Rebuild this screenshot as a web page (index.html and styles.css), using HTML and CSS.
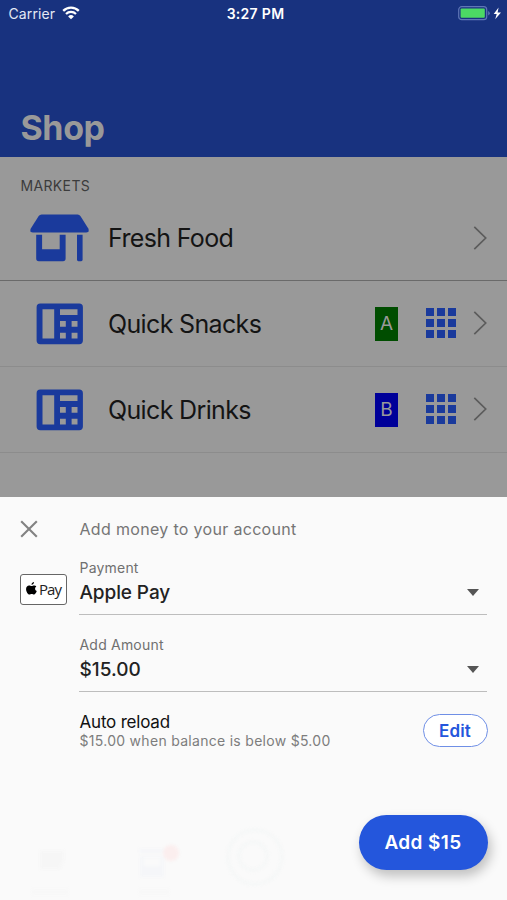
FILE: index.html
```html
<!DOCTYPE html>
<html lang="en">
<head>
<meta charset="utf-8">
<title>Shop</title>
<link rel="stylesheet" href="styles.css">
</head>
<body>
<svg class="defs" aria-hidden="true">
  <symbol id="machine" viewBox="0 0 48 42">
    <path fill-rule="evenodd" d="M4.300 .6h38.900a3.700 3.700 0 0 1 3.700 3.700v33.200a3.700 3.700 0 0 1-3.700 3.700H4.300a3.700 3.700 0 0 1-3.700-3.700V4.300a3.700 3.700 0 0 1 3.700-3.700zM6.500 6.300v29.200h11.700V6.300zM24 6.300v5.700h17.500V6.300zM24 18v5.800h5.800V18zM35.600 18v5.800h5.900V18zM24 29.700v5.800h5.800v-5.800zM35.600 29.700v5.800h5.900v-5.800z"/>
  </symbol>
  <symbol id="grid" viewBox="0 0 30 30">
    <path d="M0 0h8v8H0zM11 0h8v8h-8zM22 0h8v8h-8zM0 11h8v8H0zM11 11h8v8h-8zM22 11h8v8h-8zM0 22h8v8H0zM11 22h8v8h-8zM22 22h8v8h-8z"/>
  </symbol>
  <symbol id="chevron" viewBox="0 0 14 24">
    <path d="M1.300 .8 12.700 12 1.300 23.200" fill="none" stroke="#5c5c5c" stroke-width="1.700"/>
  </symbol>
</svg>

<header class="header">
  <div class="status">
    <div class="status-left">
      <span class="carrier">Carrier</span>
      <svg class="wifi" viewBox="0 0 18 14" fill="none" stroke="#fff">
        <path d="M1.200 4.900a11 11 0 0 1 15.600 0" stroke-width="2.300"/>
        <path d="M4 8a7.100 7.100 0 0 1 10 0" stroke-width="2.200"/>
        <path d="M6.100 10.400a4.100 4.100 0 0 1 5.800 0L9 13.300z" fill="#fff" stroke="none"/>
      </svg>
    </div>
    <span class="time">3:27 PM</span>
    <div class="status-right">
      <svg class="battery" viewBox="0 0 43 15">
        <rect x=".7" y=".7" width="28" height="13" rx="3" fill="none" stroke="#5f76b6" stroke-width="1.200"/>
        <rect x="2.600" y="2.600" width="24.200" height="9.200" rx="1" fill="#4cd964"/>
        <path d="M30.200 5v4.500q1.600-.7 1.600-2.250T30.200 5z" fill="#5f76b6"/>
        <path d="M40.600 1.500 35.700 8h3l-1.500 5.300L43 6.500h-3.400z" fill="#fff"/>
      </svg>
    </div>
  </div>
  <h1 class="title">Shop</h1>
</header>

<main class="list">
  <h2 class="section">MARKETS</h2>
  <div class="row row-first">
    <svg class="icon-store" viewBox="0 0 60 48">
      <path d="M11.600 .5h36q1.800 0 2.800 1.500l7.900 12.500q.8 1.500.2 2.700-.7 1.300-2.500 1.300H3q-1.800 0-2.500-1.300-.5-1.200.3-2.700L8.700 2q1-1.500 2.900-1.500z"/>
      <path fill-rule="evenodd" d="M6.200 20.800h5.900v14.500h17.600V20.800h5.900v23.800q0 2.600-2.600 2.600H8.800q-2.600 0-2.600-2.600z"/>
      <path d="M47 20.800h5.600v25q0 1.400-1.400 1.400h-2.800q-1.400 0-1.400-1.400z"/>
    </svg>
    <span class="name">Fresh Food</span>
    <svg class="chevron"><use href="#chevron"/></svg>
  </div>
  <div class="row">
    <svg class="icon-machine"><use href="#machine"/></svg>
    <span class="name">Quick Snacks</span>
    <span class="badge badge-a">A</span>
    <svg class="grid"><use href="#grid"/></svg>
    <svg class="chevron"><use href="#chevron"/></svg>
  </div>
  <div class="row">
    <svg class="icon-machine"><use href="#machine"/></svg>
    <span class="name">Quick Drinks</span>
    <span class="badge badge-b">B</span>
    <svg class="grid"><use href="#grid"/></svg>
    <svg class="chevron"><use href="#chevron"/></svg>
  </div>
</main>

<section class="sheet">
  <div class="sheet-head">
    <svg class="close" viewBox="0 0 18 18"><path d="M1.200 1.200 16.800 16.800M16.800 1.200 1.200 16.800" stroke="#828282" stroke-width="2.100"/></svg>
    <span class="sheet-title">Add money to your account</span>
  </div>
  <div class="sheet-body">
    <div class="pay-mark">
      <svg class="apple" viewBox="0 0 20 24"><path d="M14.600 0c.2 2.600-2 5.300-4.600 5.300C9.700 2.700 12.200.2 14.600 0zM18.900 8.200c-3.500 2.200-3 6.900.8 8.500-.9 2.900-3 6.500-5.100 6.500-1.700 0-2.200-1-4.200-1s-2.600 1-4.200 1C3.200 23.200 0 17.500 0 13 0 8.700 2.700 6.300 5.500 6.300c1.900 0 3.300 1.200 4.700 1.200 1.300 0 3-1.300 5.100-1.200 1.500.1 2.800.7 3.600 1.900z"/></svg>
      <span class="pay-text">Pay</span>
    </div>
    <div class="fields">
      <div class="field">
        <span class="label">Payment</span>
        <div class="select"><span class="value pay-value">Apple Pay</span><span class="caret"></span></div>
      </div>
      <div class="field">
        <span class="label">Add Amount</span>
        <div class="select"><span class="value">$15.00</span><span class="caret"></span></div>
      </div>
      <div class="reload">
        <div class="reload-text">
          <span class="reload-title">Auto reload</span>
          <span class="reload-note">$15.00 when balance is below $5.00</span>
        </div>
        <button class="edit">Edit</button>
      </div>
    </div>
  </div>
  <footer class="actions">
    <div class="ghost-tabs">
      <svg class="ghosts" viewBox="0 0 260 60">
        <path d="M14 16h24v9l-4 9H14z" fill="#f6f6f6"/>
        <path d="M6 54h36v6H6z" fill="#f8f8f8"/>
        <path d="M113 14h26v4h-26zM114 21h24v21h-24z" fill="#f5f6f9"/>
        <path d="M118 23h16v8h-16z" fill="#fafafa"/>
        <circle cx="145" cy="18" r="8" fill="#fbeeee"/>
        <path d="M113 54h30v6h-30z" fill="#f8f8f8"/>
        <circle cx="229" cy="22" r="27" fill="none" stroke="#f5f7f7" stroke-width="3"/>
        <circle cx="227" cy="21" r="14" fill="none" stroke="#f5f7f7" stroke-width="3"/>
      </svg>
    </div>
    <button class="add">Add $15</button>
  </footer>
</section>
</body>
</html>
```

FILE: styles.css
```css
* { box-sizing: border-box; }

body {
  margin: 0;
  width: 507px;
  height: 900px;
  overflow: hidden;
  display: flex;
  flex-direction: column;
  background: #999;
  font-family: Inter, "Liberation Sans", sans-serif;
}

button { font-family: inherit; padding: 0; }
svg, span { flex: none; }
.defs { display: none; }

.header {
  height: 157px;
  flex: none;
  background: #18327f;
}

.status {
  height: 28px;
  padding: 0 6px 0 8px;
  display: grid;
  grid-template-columns: 1fr auto 1fr;
  align-items: center;
  color: #fff;
  font-size: 14px;
}
.status-left { display: flex; align-items: center; gap: 7px; }
.status-right { display: flex; justify-content: flex-end; }
.carrier { margin-top: -2px; padding-left: .5px; letter-spacing: .1px; color: #e4e9f4; }
.time { margin-top: -2px; padding-left: 2px; font-weight: 600; letter-spacing: .3px; }
.wifi { width: 18px; height: 14px; margin: -2px 0 0 -.5px; }
.battery { width: 43px; height: 15px; margin-top: -2px; }

.title {
  margin: 79px 0 0 20.5px;
  font-size: 34px;
  line-height: 42px;
  font-weight: 700;
  letter-spacing: -.4px;
  color: #999;
}

.list { height: 340px; flex: none; background: #999; }
.section {
  height: 38px;
  margin: 0;
  padding: 19px 0 0 20.5px;
  font-size: 14px;
  line-height: 20px;
  font-weight: 400;
  letter-spacing: .35px;
  color: #3c3c3c;
}
.row {
  height: 86px;
  padding: 0 20px 1px 36px;
  display: flex;
  align-items: center;
  border-bottom: 1px solid #8c8c8c;
  fill: #1a3a9c;
}
.row-first { padding-left: 30px; padding-bottom: 0; border-bottom-color: #6a6a6a; }
.icon-store { width: 60px; height: 48px; margin-right: 18px; }
.icon-machine { width: 48px; height: 42px; margin: 1px 24px 0 0; }
.name { flex: 1; font-size: 25px; line-height: 30px; letter-spacing: -.65px; color: #141414; }
.icon-machine + .name { padding-top: 2px; }
.badge {
  width: 23px;
  height: 34px;
  margin: 1px 28px 0 0;
  font-size: 19px;
  line-height: 34px;
  text-align: center;
  color: #999;
}
.badge-a { background: #004d00; }
.badge-b { background: #000099; }
.grid { width: 30px; height: 30px; margin-right: 17px; }
.chevron { width: 14px; height: 24px; }

.sheet {
  flex: 1;
  padding: 0 20px;
  display: flex;
  flex-direction: column;
  background: #fafafa;
}
.sheet-head {
  height: 58px;
  padding-top: 7px;
  display: flex;
  align-items: center;
}
.close { width: 18px; height: 18px; margin: -1px 41.5px 0 0; }
.sheet-title { margin-top: -2px; font-size: 16px; color: #757575; letter-spacing: .32px; }

.sheet-body { display: flex; }
.pay-mark {
  width: 47px;
  height: 31px;
  margin: 19px 12px 0 0;
  padding-bottom: 2px;
  display: flex;
  align-items: center;
  justify-content: center;
  gap: 2px;
  border: 1px solid #666;
  border-radius: 3px;
  background: #fff;
}
.apple { width: 11px; height: 13px; }
.pay-text { font-family: "Open Sans", sans-serif; font-size: 15px; line-height: 20px; letter-spacing: -.9px; color: #222; }

.fields { flex: 1; }
.field {
  height: 60px;
  margin-bottom: 17px;
  border-bottom: 1px solid #bdbdbd;
}
.label { display: block; padding: 4px 0 0 .5px; font-size: 14px; line-height: 18px; color: #707070; letter-spacing: .2px; }
.select {
  height: 30px;
  padding: 0 8px 0 .5px;
  display: flex;
  align-items: center;
  justify-content: space-between;
}
.value { font-size: 19px; font-weight: 500; color: #222; }
.pay-value { letter-spacing: -.1px; }
.caret { border: 6.5px solid transparent; border-top: 7px solid #555; border-bottom: 0; }

.reload { display: flex; justify-content: space-between; padding-top: 3px; }
.reload-text { display: flex; flex-direction: column; padding-left: .5px; }
.reload-title { font-size: 17px; line-height: 21px; letter-spacing: -.2px; color: #111; }
.reload-note { margin-top: -1px; font-size: 14px; line-height: 18px; color: #7d7d7d; letter-spacing: .29px; }
.edit {
  width: 65px;
  height: 33px;
  margin: 2px -.5px 0 0;
  border: 1px solid #6f8fe6;
  border-radius: 17px;
  background: #fff;
  color: #2456dc;
  font-size: 17px;
  font-weight: 600;
  letter-spacing: .2px;
}

.actions {
  margin-top: auto;
  height: 85px;
  display: flex;
  justify-content: space-between;
}
.ghost-tabs { padding-top: 20px; margin-left: 6px; }
.ghosts { width: 260px; height: 60px; overflow: visible; filter: blur(1.7px); }
.add {
  width: 129px;
  height: 55px;
  margin-right: -.5px;
  border: 0;
  border-radius: 28px;
  background: #2456dc;
  color: #fff;
  font-size: 19px;
  font-weight: 600;
  letter-spacing: .4px;
  box-shadow: 3px 6px 12px rgba(0, 0, 0, .24);
}
```
